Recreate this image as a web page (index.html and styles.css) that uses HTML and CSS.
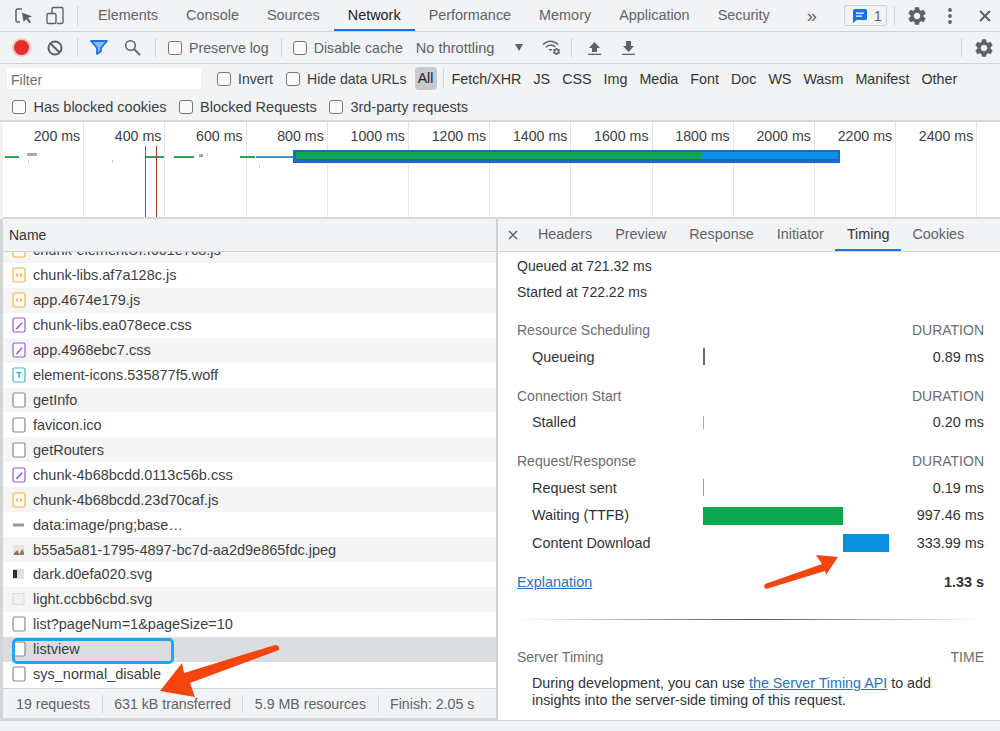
FILE: index.html
```html
<!DOCTYPE html>
<html lang="en">
<head>
    <meta charset="utf8"/>
    <title>DevTools Network</title>
    <link rel="stylesheet" href="styles.css">
</head>
<body>
<svg class="defs" width="0" height="0">
    <symbol id="gear" viewBox="0 0 24 24"><path d="M19.14 12.94c.04-.3.06-.61.06-.94 0-.32-.02-.64-.07-.94l2.03-1.58a.49.49 0 0 0 .12-.61l-1.92-3.32a.488.488 0 0 0-.59-.22l-2.39.96c-.5-.38-1.03-.7-1.62-.94l-.36-2.54a.484.484 0 0 0-.48-.41h-3.84c-.24 0-.43.17-.47.41l-.36 2.54c-.59.24-1.13.57-1.62.94l-2.39-.96c-.22-.08-.47 0-.59.22L2.74 8.87c-.12.21-.08.47.12.61l2.03 1.58c-.05.3-.09.63-.09.94s.02.64.07.94l-2.03 1.58a.49.49 0 0 0-.12.61l1.92 3.32c.12.22.37.29.59.22l2.39-.96c.5.38 1.03.7 1.62.94l.36 2.54c.05.24.24.41.48.41h3.84c.24 0 .44-.17.47-.41l.36-2.54c.59-.24 1.13-.56 1.62-.94l2.39.96c.22.08.47 0 .59-.22l1.92-3.32c.12-.22.07-.47-.12-.61l-2.01-1.58zM12 15.6c-1.98 0-3.6-1.62-3.6-3.6s1.62-3.6 3.6-3.6 3.6 1.62 3.6 3.6-1.62 3.6-3.6 3.6z"/></symbol>
    <symbol id="file-js" viewBox="0 0 14 16"><rect x="1" y="1" width="12" height="14" rx="1.5" fill="#fffaf0" stroke="#f0b848" stroke-width="1.2"/><path d="M6 6.5 4.2 8 6 9.5M8 6.5 9.8 8 8 9.5" fill="none" stroke="#c98a20" stroke-width="1"/></symbol>
    <symbol id="file-css" viewBox="0 0 14 16"><rect x="1" y="1" width="12" height="14" rx="1.5" fill="#fff" stroke="#9a55d8" stroke-width="1.2"/><path d="M3.8 11.5 9.6 5.2l1 1-5.6 6.2z" fill="#9a55d8"/></symbol>
    <symbol id="file-font" viewBox="0 0 14 16"><rect x="1" y="1" width="12" height="14" rx="1.5" fill="#fff" stroke="#3eb8c8" stroke-width="1.2"/><path d="M4.5 5h5v1.2H7.6V11H6.4V6.2H4.5z" fill="#2b9fb0"/></symbol>
    <symbol id="file-doc" viewBox="0 0 14 16"><rect x="1" y="1" width="12" height="14" rx="1.5" fill="#fff" stroke="#8a8a8a" stroke-width="1.2"/></symbol>
</svg>

<header class="tabbar">
    <svg class="icon first" width="20" height="20" viewBox="0 0 20 20"><path d="M8 3H3.500A1.500 1.500 0 0 0 2 4.500V14.500A1.500 1.500 0 0 0 3.500 16H6" fill="none" stroke="#5f6368" stroke-width="1.500"/><path d="M8 6.500 18 10.500l-4 1.500 3 4-1.800 1.300-3-4L9.500 16z" fill="#5f6368"/></svg>
    <svg class="icon device" width="20" height="20" viewBox="0 0 20 20"><path d="M7 7V3a1.500 1.500 0 0 1 1.500-1.500h8A1.500 1.500 0 0 1 18 3v13a1.500 1.500 0 0 1-1.500 1.500H12" fill="none" stroke="#5f6368" stroke-width="1.400"/><rect x="2" y="7.500" width="9" height="10" rx="1.500" fill="none" stroke="#5f6368" stroke-width="1.400"/></svg>
    <span class="divider tall head-div"></span>
    <a class="tab">Elements</a>
    <a class="tab">Console</a>
    <a class="tab">Sources</a>
    <a class="tab active">Network</a>
    <a class="tab">Performance</a>
    <a class="tab">Memory</a>
    <a class="tab">Application</a>
    <a class="tab">Security</a>
    <span class="more">»</span>
    <span class="badge">
        <svg width="14" height="14" viewBox="0 0 14 14"><path d="M1.500 0h11A1.500 1.500 0 0 1 14 1.500v8A1.500 1.500 0 0 1 12.500 11H3.500L0 14V1.500A1.500 1.500 0 0 1 1.500 0z" fill="#1a73e8"/><path d="M3 3.500h8v1.300H3zM3 6.500h6v1.300H3z" fill="#fff"/></svg>
        1
    </span>
    <span class="divider tall badge-div"></span>
    <svg class="icon top-gear" width="22" height="22"><use href="#gear" fill="#5f6368"/></svg>
    <svg class="icon dots" width="6" height="18" viewBox="0 0 6 18"><circle cx="3" cy="3" r="1.900" fill="#5f6368"/><circle cx="3" cy="9" r="1.900" fill="#5f6368"/><circle cx="3" cy="15" r="1.900" fill="#5f6368"/></svg>
    <svg class="icon close" width="14" height="14" viewBox="0 0 14 14"><path d="M2 2 12 12M12 2 2 12" stroke="#5f6368" stroke-width="2"/></svg>
</header>

<div class="toolbar">
    <span class="record"></span>
    <svg class="icon clear" width="16" height="16" viewBox="0 0 16 16"><circle cx="8" cy="8" r="6.500" fill="none" stroke="#5f6368" stroke-width="2"/><path d="M3.500 3.500 12.500 12.500" stroke="#5f6368" stroke-width="2"/></svg>
    <span class="divider d-a"></span>
    <svg class="icon filter" width="18" height="15" viewBox="0 0 18 15"><path d="M1 1h16l-6 7v3l-4 3V8z" fill="#8ab8f0" stroke="#1a73e8" stroke-width="1.800" stroke-linejoin="round"/></svg>
    <svg class="icon search" width="17" height="17" viewBox="0 0 17 17"><circle cx="6.500" cy="6.500" r="4.800" fill="none" stroke="#5f6368" stroke-width="1.500"/><path d="M10 10 16 16" stroke="#5f6368" stroke-width="1.800"/></svg>
    <span class="divider d-b"></span>
    <label class="opt preserve"><input type="checkbox">Preserve log</label>
    <span class="divider d-c"></span>
    <label class="opt"><input type="checkbox">Disable cache</label>
    <span class="throttle">No throttling</span>
    <span class="caret"></span>
    <svg class="icon wifi" width="20" height="17" viewBox="0 0 20 17"><path d="M1 5.500C5.500 1 11.500 1 16 5.500M3.800 8.300C7 5.300 10.500 5.300 13.500 8" fill="none" stroke="#5f6368" stroke-width="1.500"/><path d="M6.500 10h4l-2 2.500z" fill="#5f6368"/><use href="#gear" x="10" y="8" width="9" height="9" fill="#5f6368"/></svg>
    <span class="divider d-d"></span>
    <svg class="icon upload" width="13" height="14" viewBox="0 0 13 14"><path d="M6.500 1 12 7H9v4H4V7H1z M0 12.800h13V14H0z" fill="#5f6368"/></svg>
    <svg class="icon download" width="13" height="14" viewBox="0 0 13 14"><path d="M4 0h5v5h3L6.500 11 1 5h3z M0 12.800h13V14H0z" fill="#5f6368"/></svg>
    <span class="spacer"></span>
    <span class="divider"></span>
    <svg class="icon net-gear" width="22" height="22"><use href="#gear" fill="#5f6368"/></svg>
</div>

<div class="filterbar">
    <input class="filter-input" type="text" placeholder="Filter">
    <label class="opt dark invert"><input type="checkbox">Invert</label>
    <label class="opt dark hide-urls"><input type="checkbox">Hide data URLs</label>
    <span class="pill">All</span>
    <span class="divider d-e"></span>
    <span class="type">Fetch/XHR</span>
    <span class="type">JS</span>
    <span class="type">CSS</span>
    <span class="type">Img</span>
    <span class="type">Media</span>
    <span class="type">Font</span>
    <span class="type">Doc</span>
    <span class="type">WS</span>
    <span class="type">Wasm</span>
    <span class="type">Manifest</span>
    <span class="type">Other</span>
</div>

<div class="blockedbar">
    <label class="opt dark"><input type="checkbox">Has blocked cookies</label>
    <label class="opt dark"><input type="checkbox">Blocked Requests</label>
    <label class="opt dark"><input type="checkbox">3rd-party requests</label>
</div>

<div class="overview">
    <div class="tick">200 ms</div>
    <div class="tick">400 ms</div>
    <div class="tick">600 ms</div>
    <div class="tick">800 ms</div>
    <div class="tick">1000 ms</div>
    <div class="tick">1200 ms</div>
    <div class="tick">1400 ms</div>
    <div class="tick">1600 ms</div>
    <div class="tick">1800 ms</div>
    <div class="tick">2000 ms</div>
    <div class="tick">2200 ms</div>
    <div class="tick">2400 ms</div>

    <span class="mark green" style="left:2px;width:14px"></span>
    <span class="mark grey" style="left:24px;width:10px"></span>
    <span class="mark green" style="left:143px;width:18px"></span>
    <span class="mark green" style="left:171px;width:20px"></span>
    <span class="mark grey small" style="left:196px;width:4px"></span>
    <span class="mark green" style="left:237px;width:15px"></span>
    <span class="mark blue" style="left:253px;width:38px"></span>
    <span class="speck" style="left:25px;top:38px"></span>
    <span class="speck" style="left:109px;top:38px"></span>
    <span class="speck" style="left:256px;top:43px"></span>
    <span class="speck" style="left:204px;top:31px"></span>
    <span class="vline dom" style="left:142px"></span>
    <span class="vline load" style="left:153px"></span>
    <div class="bigbar"><span class="bigbar-wait"></span><span class="bigbar-down"></span></div>
</div>

<main class="split">
    <section class="requests">
        <div class="name-head">Name</div>
        <ul class="rows">
            <li class="clipped"><svg><use href="#file-js"/></svg>chunk-elementUI.f601e7c8.js</li>
            <li><svg><use href="#file-js"/></svg>chunk-libs.af7a128c.js</li>
            <li><svg><use href="#file-js"/></svg>app.4674e179.js</li>
            <li><svg><use href="#file-css"/></svg>chunk-libs.ea078ece.css</li>
            <li><svg><use href="#file-css"/></svg>app.4968ebc7.css</li>
            <li><svg><use href="#file-font"/></svg>element-icons.535877f5.woff</li>
            <li><svg><use href="#file-doc"/></svg>getInfo</li>
            <li><svg><use href="#file-doc"/></svg>favicon.ico</li>
            <li><svg><use href="#file-doc"/></svg>getRouters</li>
            <li><svg><use href="#file-css"/></svg>chunk-4b68bcdd.0113c56b.css</li>
            <li><svg><use href="#file-js"/></svg>chunk-4b68bcdd.23d70caf.js</li>
            <li><svg viewBox="0 0 14 16"><rect x="1" y="6.500" width="11" height="3" fill="#9a9a9a"/></svg>data:image/png;base…</li>
            <li><svg viewBox="0 0 14 16"><rect x="1" y="3" width="11" height="10" fill="#e8e4e0"/><path d="M1 13 5 8l3 5z" fill="#a86a50"/><path d="M7 13l3-6 2 3v3z" fill="#7a8a70"/></svg>b55a5a81-1795-4897-bc7d-aa2d9e865fdc.jpeg</li>
            <li><svg viewBox="0 0 14 16"><rect x="1" y="3" width="11" height="10" fill="#e0e0e0"/><rect x="1" y="4" width="4" height="8" fill="#303030"/></svg>dark.d0efa020.svg</li>
            <li><svg viewBox="0 0 14 16"><rect x="1" y="2.500" width="11" height="11" fill="#f0f0f0" stroke="#dcdcdc"/></svg>light.ccbb6cbd.svg</li>
            <li><svg><use href="#file-doc"/></svg>list?pageNum=1&amp;pageSize=10</li>
            <li class="selected"><svg><use href="#file-doc"/></svg>listview</li>
            <li><svg><use href="#file-doc"/></svg>sys_normal_disable</li>
        </ul>
        <footer class="summary">
            <span>19 requests</span>
            <span>631 kB transferred</span>
            <span>5.9 MB resources</span>
            <span>Finish: 2.05 s</span>
        </footer>
    </section>

    <section class="details">
        <nav class="detail-tabs">
            <svg class="detail-close" width="10" height="10" viewBox="0 0 10 10"><path d="M1 1 9 9M9 1 1 9" stroke="#5f6368" stroke-width="1.500"/></svg>
            <a class="dtab">Headers</a>
            <a class="dtab">Preview</a>
            <a class="dtab">Response</a>
            <a class="dtab">Initiator</a>
            <a class="dtab active">Timing</a>
            <a class="dtab">Cookies</a>
        </nav>
        <div class="timing">
            <p class="stamp">Queued at 721.32 ms</p>
            <p class="stamp">Started at 722.22 ms</p>

            <div class="t-head"><span>Resource Scheduling</span><span>DURATION</span></div>
            <div class="t-row"><span>Queueing</span><span class="t-bar"><i class="b-queue"></i></span><span class="t-val">0.89 ms</span></div>

            <div class="t-head"><span>Connection Start</span><span>DURATION</span></div>
            <div class="t-row"><span>Stalled</span><span class="t-bar"><i class="b-stall"></i></span><span class="t-val">0.20 ms</span></div>

            <div class="t-head"><span>Request/Response</span><span>DURATION</span></div>
            <div class="t-row"><span>Request sent</span><span class="t-bar"><i class="b-sent"></i></span><span class="t-val">0.19 ms</span></div>
            <div class="t-row"><span>Waiting (TTFB)</span><span class="t-bar"><i class="b-wait"></i></span><span class="t-val">997.46 ms</span></div>
            <div class="t-row"><span>Content Download</span><span class="t-bar"><i class="b-down"></i></span><span class="t-val">333.99 ms</span></div>

            <div class="t-total"><a href="#">Explanation</a><b>1.33 s</b></div>
            <div class="t-rule"></div>

            <div class="t-head server"><span>Server Timing</span><span>TIME</span></div>
            <p class="t-note">During development, you can use <a href="#">the Server Timing API</a> to add insights into the server-side timing of this request.</p>
        </div>
    </section>
</main>

<div class="drawer"></div>

<!-- annotations drawn over the screenshot -->
<div class="callout"></div>
<svg class="arrows" width="1000" height="731" viewBox="0 0 1000 731">
    <path d="M160 691 182 663 184 673 275 645Q280 645 279 650L190 683 195 697z" fill="#f4450f"/>
    <path d="M838 557 816 555 822 564 765 584Q763 587 766 589L825 571 826 575z" fill="#f4450f"/>
</svg>
</body>
</html>
```

FILE: styles.css
```css
* {
    box-sizing: border-box;
}

html, body {
    height: 100%;
}

body {
    margin: 0;
    height: 731px;
    overflow: hidden;
    position: relative;
    font-family: "Liberation Sans", Arial, sans-serif;
    font-size: 14.500px;
    color: #333;
    background: #f1f3f4;
}

.defs {
    position: absolute;
}

.icon {
    flex: none;
}

.divider {
    flex: none;
    width: 1px;
    height: 19px;
    background: #d0d2d5;
}

.divider.tall {
    height: 20px;
}

/* top tab strip */
.tabbar {
    display: flex;
    align-items: center;
    height: 32px;
    border-bottom: 1px solid #cfd1d4;
    padding-left: 14px;
}

.tabbar .device {
    margin-left: 11px;
}

.head-div {
    margin: 0 6px 0 12px;
}

.tab {
    padding: 0 14px;
    height: 31px;
    line-height: 30px;
    font-size: 14.420px;
    color: #5f6368;
    white-space: nowrap;
}

.tab.active {
    color: #202124;
    border-bottom: 2px solid #1a73e8;
}

.more {
    width: 10px;
    margin-left: 23px;
    font-size: 18px;
    color: #5f6368;
    line-height: 30px;
}

.badge {
    display: flex;
    align-items: center;
    gap: 7px;
    width: 43px;
    height: 21px;
    margin-left: 27px;
    padding-left: 8px;
    border: 1px solid #d0d2d5;
    border-radius: 2px;
    color: #5f6368;
}

.badge-div {
    margin-left: 7px;
}

.top-gear {
    margin-left: 11px;
}

.dots {
    margin-left: 19px;
}

.close {
    margin-left: 25px;
}

/* record / filter toolbar */
.toolbar {
    display: flex;
    align-items: center;
    height: 32px;
    border-bottom: 1px solid #cfd1d4;
    padding-left: 14px;
    font-size: 14.200px;
}

.record {
    flex: none;
    width: 15px;
    height: 15px;
    border-radius: 50%;
    background: #e3312a;
    box-shadow: 0 0 0 2px #f6c4c0;
}

.clear {
    margin-left: 18px;
}

.d-a {
    margin-left: 14px;
}

.filter {
    margin-left: 12px;
}

.search {
    margin-left: 16px;
}

.d-b {
    margin-left: 14px;
}

.preserve {
    margin-left: 12px;
}

.d-c {
    margin: 0 11px 0 12px;
}

.throttle {
    margin-left: 13px;
    font-size: 14.600px;
    color: #5f6368;
}

.caret {
    margin-left: 21px;
    border-left: 4px solid transparent;
    border-right: 4px solid transparent;
    border-top: 7px solid #5f6368;
}

.wifi {
    margin-left: 19px;
}

.d-d {
    margin-left: 9px;
}

.upload {
    margin-left: 16px;
}

.download {
    margin-left: 21px;
}

.spacer {
    flex: 1;
}

.net-gear {
    margin: 0 5px 0 11px;
}

/* checkbox with label */
.opt {
    display: flex;
    align-items: center;
    gap: 7px;
    color: #5f6368;
    white-space: nowrap;
}

.opt.dark {
    color: #3c4043;
}

.opt input {
    appearance: none;
    flex: none;
    width: 14px;
    height: 14px;
    margin: 0;
    background: #fbfbfc;
    border: 1px solid #767676;
    border-radius: 3px;
}

.filterbar {
    display: flex;
    align-items: center;
    height: 29px;
    padding-left: 7px;
}

.filter-input {
    width: 194px;
    height: 21px;
    padding: 2px 0 0 4px;
    border: none;
    background: #fff;
    font: inherit;
    font-size: 14px;
}

.filter-input::placeholder {
    color: #6f7275;
}

.invert {
    margin-left: 16px;
    font-size: 14px;
}

.hide-urls {
    margin-left: 13px;
    font-size: 14.100px;
}

.pill {
    margin-left: 8px;
    width: 22px;
    height: 23px;
    line-height: 23px;
    text-align: center;
    background: #c9cacc;
    border-radius: 4px;
    color: #202124;
    font-size: 14px;
}

.d-e {
    margin: 0 8px 0 6px;
}

.type {
    margin-right: 12px;
    font-size: 14.300px;
    color: #303336;
    white-space: nowrap;
}

.blockedbar {
    display: flex;
    align-items: center;
    gap: 12px;
    height: 29px;
    padding-left: 12px;
    border-bottom: 2px solid #d6d8da;
}

.blockedbar .opt {
    gap: 7.500px;
}

/* overview graph */
.overview {
    display: flex;
    position: relative;
    height: 97px;
    margin-left: 3px;
    background: #fff;
    border-bottom: 2px solid #d6d8da;
    font-size: 14.200px;
}

.tick {
    flex: none;
    width: 81.200px;
    padding: 6px 3px 0 0;
    text-align: right;
    color: #3c4043;
    border-right: 1px solid #e4e5e7;
}

.mark {
    position: absolute;
    top: 34px;
    height: 2px;
}

.mark.green {
    background: #2ba552;
}

.mark.grey {
    top: 31px;
    height: 2.500px;
    background: #a8a8a8;
}

.mark.small {
    top: 32px;
}

.mark.blue {
    background: #3d97cf;
}

.speck {
    position: absolute;
    width: 1px;
    height: 3px;
    background: #cfcfcf;
}

.vline {
    position: absolute;
    top: 24px;
    bottom: 0;
    width: 1px;
}

.vline.dom {
    background: #2f74c0;
}

.vline.load {
    background: #a5342c;
}

.bigbar {
    position: absolute;
    left: 290px;
    top: 28px;
    width: 547px;
    height: 13px;
    display: flex;
    padding: 2px 2px 4px 3px;
    background: #1c68c8;
}

.bigbar-wait {
    width: 405px;
    background: #0fa653;
}

.bigbar-down {
    flex: 1;
    background: #0b90e6;
}

/* lower split */
.split {
    display: flex;
    height: 501px;
}

.requests {
    display: flex;
    flex-direction: column;
    width: 498px;
    border-left: 3px solid #d3d5d7;
    border-right: 2px solid #cfd1d4;
    border-bottom: 2px solid #d3d5d7;
}

.name-head {
    flex: none;
    height: 33px;
    line-height: 32px;
    padding-left: 6px;
    font-size: 14px;
    color: #303336;
    border-bottom: 1px solid #d0d2d5;
}

.rows {
    flex: 1;
    margin: 0;
    padding: 0;
    list-style: none;
    overflow: hidden;
    background: #fff;
}

.rows li {
    display: flex;
    align-items: center;
    gap: 7px;
    height: 24.930px;
    padding-left: 9px;
    white-space: nowrap;
    color: #3c4043;
    background: #fff;
}

.rows li:nth-child(odd) {
    background: #f5f5f5;
}

.rows li svg {
    flex: none;
    width: 14px;
    height: 16px;
}

.rows li.clipped {
    margin-top: -14px;
}

.rows li.selected {
    background: #dadce0;
}

.summary {
    flex: none;
    display: flex;
    align-items: center;
    height: 30px;
    background: #f1f3f4;
    border-top: 1px solid #d0d2d5;
    color: #5f6368;
    font-size: 14.200px;
}

.summary span {
    padding: 0 11.500px;
    line-height: 18px;
    border-right: 1px solid #d0d2d5;
}

.summary span:first-child {
    padding-left: 13px;
}

.summary span:last-child {
    border-right: none;
}

.details {
    flex: 1;
    background: #fff;
}

.detail-tabs {
    display: flex;
    align-items: center;
    height: 33px;
    background: #f1f3f4;
    border-bottom: 1px solid #d0d2d5;
    padding-left: 10px;
}

.detail-close {
    margin-right: 8.500px;
}

.dtab {
    height: 32px;
    line-height: 30px;
    padding: 0 11.500px;
    font-size: 14.350px;
    color: #5f6368;
}

.dtab.active {
    color: #303336;
    border-bottom: 2px solid #1a73e8;
}

.timing {
    padding: 1px 16px 0 19px;
    color: #303336;
    font-size: 14px;
}

.stamp {
    margin: 0;
    height: 26px;
    line-height: 26px;
}

.t-head {
    display: flex;
    justify-content: space-between;
    height: 26px;
    line-height: 26px;
    margin-top: 12px;
    font-size: 14px;
    color: #6a6d70;
}

.t-row {
    display: grid;
    grid-template-columns: 171px 187px 1fr;
    align-items: center;
    height: 27.500px;
    padding-left: 15px;
    font-size: 14.400px;
}

.t-val {
    text-align: right;
}

.t-bar {
    position: relative;
    display: block;
    height: 27px;
}

.t-bar i {
    position: absolute;
    display: block;
}

.b-queue {
    left: 0;
    top: 5px;
    width: 2px;
    height: 17px;
    background: #6a6a6a;
}

.b-stall {
    left: 0;
    top: 7px;
    width: 1px;
    height: 13px;
    background: #a4a8ab;
}

.b-sent {
    left: 0;
    top: 5px;
    width: 1px;
    height: 17px;
    background: #8fa5aa;
}

.b-wait {
    left: 0;
    top: 5px;
    width: 140px;
    height: 18px;
    background: #0fa650;
}

.b-down {
    left: 140px;
    top: 5px;
    width: 46px;
    height: 18px;
    background: #0b90e0;
}

.t-total {
    display: flex;
    justify-content: space-between;
    height: 26px;
    line-height: 26px;
    margin-top: 12px;
    font-size: 14.400px;
}

.t-total a,
.t-note a {
    color: #2a6fc0;
}

.t-rule {
    height: 1px;
    margin-top: 24px;
    background: linear-gradient(to right, #fff, #555 50%, #fff);
}

.t-head.server {
    margin-top: 24px;
}

.t-note {
    margin: 5px 0 0 15px;
    padding-right: 20px;
    line-height: 17px;
    font-size: 14.300px;
    color: #303336;
}

.drawer {
    height: 11px;
    border-top: 1px solid #d3d5d7;
}

/* annotations */
.callout {
    position: absolute;
    left: 12px;
    top: 638px;
    width: 162px;
    height: 26px;
    border: 3px solid #1ea7f0;
    border-radius: 5px;
}

.arrows {
    position: absolute;
    left: 0;
    top: 0;
    pointer-events: none;
}
```
